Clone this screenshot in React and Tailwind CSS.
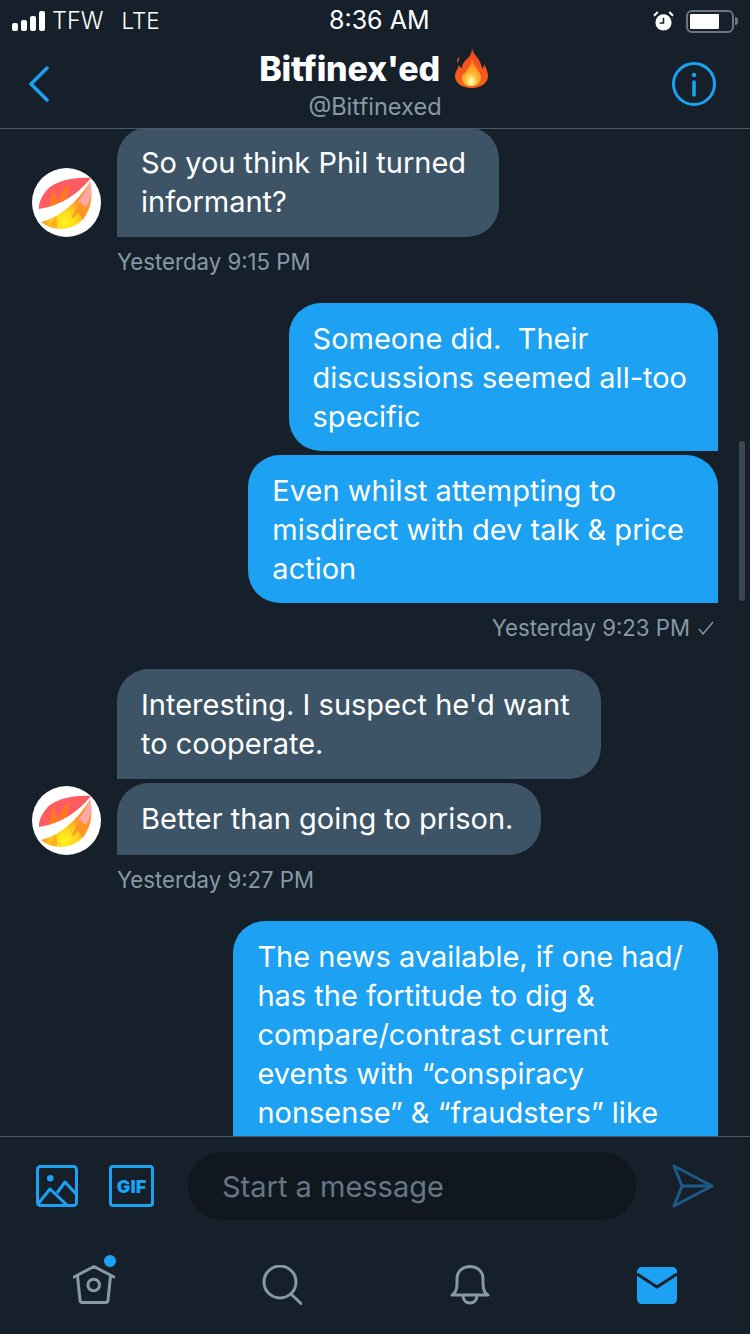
import React from 'react'

function Flame({ className }) {
  return (
    <svg viewBox="0 0 33 40" className={className}>
      <defs>
        <linearGradient id="flo" x1="0" y1="0" x2="0" y2="1">
          <stop offset="0%" stopColor="#f2481e" />
          <stop offset="100%" stopColor="#f7631c" />
        </linearGradient>
        <radialGradient id="fli" cx="48%" cy="84%" r="72%">
          <stop offset="0%" stopColor="#fffff0" />
          <stop offset="20%" stopColor="#ffe96a" />
          <stop offset="50%" stopColor="#ffb02e" />
          <stop offset="100%" stopColor="#ff8420" />
        </radialGradient>
      </defs>
      <path d="M4 9c1 2-1 5-2 6 0-3 1-5 2-6z" fill="#f7631c" />
      <path
        d="M17 0c1 6 6 9 8 14 1 2 2 5 2 7 1-1 2-3 2-5 2 4 4 8 4 12 0 7-7 12-16.500 12S0 35 0 28c0-4 3-7 4-11 1 2 2 3 3 3 0-5 4-8 7-11 2-3 3-6 3-9z"
        fill="url(#flo)"
      />
      <path
        d="M17 11c1 6 7 11 9 17 1 6-4 10-10 10-6 0-10-4-9-9 1-4 4-4 5-7 2-3 4-6 5-11z"
        fill="url(#fli)"
      />
    </svg>
  )
}

function Avatar() {
  return (
    <div className="w-[69px] h-[69px] rounded-full bg-white shrink-0 mr-4">
      <svg viewBox="0 0 69 69" className="w-[69px] h-[69px]">
        <defs>
          <radialGradient id="av" gradientUnits="userSpaceOnUse" cx="33" cy="54" r="24">
            <stop offset="0%" stopColor="#fff41e" />
            <stop offset="45%" stopColor="#ffd81a" />
            <stop offset="100%" stopColor="#ff9426" />
          </radialGradient>
        </defs>
        <path d="M7 41C6 34 12 24 18 19 28 12 44 9 59 10 46 26 30 37 7 41z" fill="#ff5c62" />
        <path d="M9 54C26 50 44 36 58 14 62 30 58 46 47 55 36 63 20 63 9 54z" fill="url(#av)" />
        <path d="M58 13c3 9 1 19-4 26-2-2-6-4-8-5 5-6 9-13 12-21z" fill="#ffa8a8" />
        <path d="M16 39c3-6 3-13 5-19 1 6 4 10 6 14 1-8 4-14 11-18-3 6-2 11-3 14-6 4-12 7-19 9z" fill="#ff7a1e" />
        <path d="M38 39c1 5 2 7 3 9 2-5 4-10 8-15 0 6 3 9 5 13l-3 6c-2-4-4-6-5-8-2 3-4 5-5 7-1-3-2-8-3-12z" fill="#ff9426" />
        <path d="M24 48c-3 4-5 7-6 11 3 1 5 1 7 1 0-4 0-8-1-12z" fill="#ffae22" />
      </svg>
    </div>
  )
}

function Bubble({ lines, mine, className = '' }) {
  return (
    <div
      className={`w-fit pl-6 pt-4 text-[29px] leading-[39px] text-white whitespace-pre ${
        mine ? 'bg-[#1da1f2] rounded-l-[32px] rounded-tr-[32px] ml-auto' : 'bg-[#3d5466] rounded-r-[32px] rounded-tl-[32px]'
      } ${className}`}
    >
      {lines.join('\n')}
    </div>
  )
}

function Time({ children, className = '' }) {
  return <div className={`text-[22.2px] leading-[26px] mt-3 text-[#8899a6] ${className}`}>{children}</div>
}

export default function App() {
  return (
    <div className="w-[750px] h-[1334px] bg-[#15202b] flex flex-col overflow-hidden font-['Inter',sans-serif]">
      {/* status bar + nav */}
      <header className="h-[129px] shrink-0 border-b border-[#4b5a68] flex flex-col">
        <div className="h-[42px] pl-3 pr-3 flex items-center justify-between text-white relative">
          <div className="flex items-center">
            <div className="flex items-end gap-[3px] mr-[7px]">
              <span className="w-[6px] h-[8px] rounded-[2px] bg-white" />
              <span className="w-[6px] h-[11px] rounded-[2px] bg-white" />
              <span className="w-[6px] h-[15px] rounded-[2px] bg-white" />
              <span className="w-[6px] h-[20px] rounded-[2px] bg-white" />
            </div>
            <span className="text-[23.5px] font-light">TFW</span>
            <span className="text-[22.5px] font-light ml-[18px]">LTE</span>
          </div>
          <div className="absolute left-[329px] text-[25px] font-normal">8:36 AM</div>
          <div className="flex items-center">
            <svg viewBox="0 0 22 22" className="w-[21px] h-[21px] mr-[12px]">
              <circle cx="11" cy="12" r="8.5" fill="#fff" />
              <path d="M11 7v5.5H7" stroke="#15202b" strokeWidth="1.6" fill="none" />
              <path d="M1 5l4-4M21 5l-4-4" stroke="#fff" strokeWidth="2" />
            </svg>
            <div className="w-[48px] h-[23px] rounded-[6px] border-2 border-[#6b7680] p-[2px]">
              <div className="w-[29px] h-full bg-white rounded-[1px]" />
            </div>
            <div className="w-[3px] h-[8px] bg-[#6b7680] rounded-r-sm ml-[1px]" />
          </div>
        </div>
        <div className="relative flex-1 flex flex-col items-center">
          <svg viewBox="0 0 22 36" className="absolute left-[28px] top-[24px] w-[22px] h-[36px]" fill="none" stroke="#1da1f2" strokeWidth="3.5" strokeLinecap="round" strokeLinejoin="round">
            <path d="M19 2L3 18l16 16" />
          </svg>
          <div className="flex items-center h-[50px] mt-[1px] -ml-[3px]">
            <span className="text-[34px] font-extrabold tracking-[-0.2px] text-white">Bitfinex'ed</span>
            <Flame className="w-[33px] h-[40px] ml-[15px]" />
          </div>
          <div className="text-[23.6px] leading-[28px] text-[#8899a6]">@Bitfinexed</div>
          <svg viewBox="0 0 44 44" className="absolute left-[672px] top-[20px] w-[44px] h-[44px]" fill="none" stroke="#1da1f2" strokeWidth="3">
            <circle cx="22" cy="22" r="20.5" />
            <path d="M22 20v13" strokeWidth="3.6" strokeLinecap="round" />
            <circle cx="22" cy="13" r="2.2" fill="#1da1f2" stroke="none" />
          </svg>
        </div>
      </header>

      {/* messages */}
      <main className="relative flex-1 overflow-hidden pl-8 pr-8">
        <div className="flex items-end -mt-[2px]">
          <Avatar />
          <Bubble className="pr-[33px] pb-4" lines={['So you think Phil turned', 'informant?']} />
        </div>
        <Time className="ml-[85px]">Yesterday 9:15 PM</Time>

        <Bubble mine className="mt-[28px] pr-[31px] pb-[15px]" lines={['Someone did.  Their', 'discussions seemed all-too', 'specific']} />
        <Bubble mine className="mt-1 pr-[34px] pb-[15px]" lines={['Even whilst attempting to', 'misdirect with dev talk & price', 'action']} />
        <Time className="flex justify-end items-center pr-1">
          Yesterday 9:23 PM
          <svg viewBox="0 0 16 14" className="w-[16px] h-[14px] ml-2" fill="none" stroke="#8899a6" strokeWidth="1.4">
            <path d="M1 8l4 5L15 1" />
          </svg>
        </Time>

        <Bubble className="mt-[28px] ml-[85px] pr-[31px] pb-4" lines={["Interesting. I suspect he'd want", 'to cooperate.']} />
        <div className="flex items-end mt-1">
          <Avatar />
          <Bubble className="pr-[28px] pb-[17px]" lines={['Better than going to prison.']} />
        </div>
        <Time className="ml-[85px]">Yesterday 9:27 PM</Time>

        <Bubble
          mine
          className="mt-[28px] pr-[35px] pb-10"
          lines={[
            'The news available, if one had/',
            'has the fortitude to dig &',
            'compare/contrast current',
            'events with “conspiracy',
            'nonsense” & “fraudsters” like',
          ]}
        />

        {/* scrollbar */}
        <div className="absolute left-[739px] top-[312px] w-[6px] h-[160px] rounded-full bg-[#3a4854]" />
      </main>

      {/* composer + tabs */}
      <footer className="h-[198px] shrink-0 border-t border-[#4b5a68]">
        <div className="h-[98px] flex items-center pl-9 pr-9">
          <svg viewBox="0 0 42 42" className="w-[42px] h-[42px]" fill="none" stroke="#1da1f2" strokeWidth="3" strokeLinejoin="round">
            <rect x="1.5" y="1.5" width="39" height="39" rx="3" />
            <circle cx="14.3" cy="13.3" r="3.3" fill="#1da1f2" stroke="none" />
            <path d="M2 39l12-15 18 17M21 28l8-11 12 13" />
          </svg>
          <div className="ml-[31px] w-[45px] h-[42px] rounded-[4px] border-[3px] border-[#1da1f2] flex items-center justify-center text-[#1da1f2] text-[18px] font-black">
            GIF
          </div>
          <div className="ml-[34px] w-[448px] h-[68px] rounded-full bg-[#10171e] flex items-center pl-[34px] pt-[1px] text-[29px] text-[#657786]">
            Start a message
          </div>
          <svg viewBox="0 0 42 44" className="ml-[36px] w-[42px] h-[44px]" fill="none" stroke="#1d5a85" strokeWidth="3" strokeLinejoin="round">
            <path d="M2 2l38 20L2 42l8-20zM10 22h30" />
          </svg>
        </div>
        <nav className="flex items-start pt-[30px]">
          <div className="relative ml-[73px] w-[42px] h-[39px]">
            <svg viewBox="0 0 42 39" className="w-[42px] h-[39px]" fill="none" stroke="#8899a6" strokeWidth="3" strokeLinejoin="round" strokeLinecap="round">
              <path d="M1 12L21 1.500 41 12M4.500 11l2.500 24c0 1.500 1 2.500 2.500 2.500h23c1.500 0 2.500-1 2.500-2.500l2.500-24" />
              <circle cx="20.700" cy="20" r="5.800" />
            </svg>
            <span className="absolute left-[31px] -top-[10px] w-[12px] h-[12px] rounded-full bg-[#1da1f2]" />
          </div>
          <svg viewBox="0 0 40 40" className="ml-[147px] w-[40px] h-[40px]" fill="none" stroke="#8899a6" strokeWidth="3" strokeLinecap="round">
            <circle cx="18" cy="17" r="16" />
            <path d="M30 30l9 8.500" />
          </svg>
          <svg viewBox="0 0 40 40" className="ml-[148px] w-[40px] h-[40px]" fill="none" stroke="#8899a6" strokeWidth="3" strokeLinejoin="round" strokeLinecap="round">
            <path d="M2 30c4-2 5-6 5-12v-4C7 6 13 1.500 20 1.500S33 6 33 14v4c0 6 1 10 5 12zM13 30c0 5 3 8 7 8s7-3 7-8" />
          </svg>
          <svg viewBox="0 0 40 37" className="ml-[147px] mt-[2px] w-[40px] h-[37px]">
            <path d="M5 0h30c3 0 5 2 5 5v27c0 3-2 5-5 5H5c-3 0-5-2-5-5V5c0-3 2-5 5-5z" fill="#1da1f2" />
            <path d="M0 7l20 13L40 7" fill="none" stroke="#15202b" strokeWidth="3" />
          </svg>
        </nav>
      </footer>
    </div>
  )
}
